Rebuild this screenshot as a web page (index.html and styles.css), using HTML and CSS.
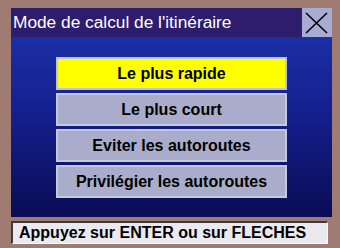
FILE: index.html
```html
<!DOCTYPE html>
<html>
<head>
<meta charset="utf-8">
<link rel="stylesheet" href="styles.css">
</head>
<body>
<div class="frame">
  <div class="titlerow">
    <div class="title">Mode de calcul de l'itinéraire</div>
    <div class="close">
      <svg width="30" height="29" viewBox="0 0 30 29"><path d="M4 5 L25 25 M25 5 L4 25" stroke="#000" stroke-width="1.6" fill="none"/></svg>
    </div>
  </div>
  <div class="panel">
    <div class="btn sel">Le plus rapide</div>
    <div class="btn">Le plus court</div>
    <div class="btn">Eviter les autoroutes</div>
    <div class="btn">Privilégier les autoroutes</div>
  </div>
  <div class="status">Appuyez sur ENTER ou sur FLECHES</div>
</div>
</body>
</html>
```
FILE: styles.css
```css
html, body { margin: 0; padding: 0; }
body { width: 340px; height: 248px; background: #9f7b72; font-family: "Liberation Sans", Arial, sans-serif; overflow: hidden; }
.frame { padding: 8px 8px 0 11px; display: flex; flex-direction: column; }
.titlerow { display: flex; height: 29px; }
.title { flex: 1; background: #2e1c6c; color: #fff; font-size: 17.3px; line-height: 29px; padding-left: 2px; white-space: nowrap; }
.close { width: 30px; height: 29px; background: #a9acd2; }
.close svg { display: block; }
.panel { height: 180px; background: linear-gradient(#1b2ea4 0%, #142090 40%, #0a0c54 100%); display: flex; flex-direction: column; align-items: center; padding-top: 20px; box-sizing: border-box; gap: 3px; }
.btn { width: 231px; height: 33px; box-sizing: border-box; border: 2px solid #c4c8e0; background: #a9adcb; color: #000; font-weight: bold; font-size: 16px; display: flex; align-items: center; justify-content: center; }
.btn.sel { background: #ffff00; border-color: #bfc4dc; }
.status { margin-top: 4px; width: 317px; height: 23px; box-sizing: border-box; background: #e9e9ef; border-top: 2px solid #3a3a3a; border-left: 2px solid #3a3a3a; border-right: 1px solid #f8f8f8; border-bottom: 1px solid #f8f8f8; font-weight: bold; font-size: 16px; line-height: 20px; padding-left: 6px; white-space: nowrap; }
```
